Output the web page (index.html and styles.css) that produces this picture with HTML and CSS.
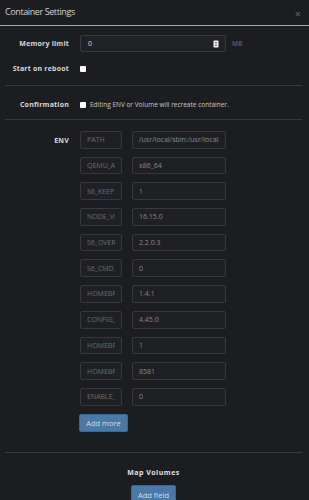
FILE: index.html
```html
<!DOCTYPE html>
<html lang="en">
<head>
    <meta charset="UTF-8">
    <meta name="viewport" content="width=device-width, initial-scale=1.0">
    <title>Container Settings</title>
    <link rel="stylesheet" href="styles.css">
</head>
<body>
    <div class="modal">
        <!-- 标题栏 -->
        <div class="modal-header">
            <h1 class="modal-title">Container Settings</h1>
            <span class="modal-close">&times;</span>
        </div>

        <div class="modal-body">
            <div class="form-row first">
                <label class="form-label">Memory limit</label>
                <div class="form-control">
                    <div class="number-input">
                        <span>0</span>
                        <svg class="spinner" width="6" height="8" viewBox="0 0 6 8">
                            <rect x="0.5" y="0.5" width="5" height="7" rx="1" fill="#f2f2f2" stroke="#888" stroke-width="0.6"/>
                            <path d="M1.8 3.2 L3 1.8 L4.2 3.2 Z M1.8 4.8 L3 6.2 L4.2 4.8 Z" fill="#333"/>
                        </svg>
                    </div>
                    <span class="unit">MB</span>
                </div>
            </div>

            <div class="form-row reboot">
                <label class="form-label">Start on reboot</label>
                <div class="form-control">
                    <span class="checkbox"></span>
                </div>
            </div>

            <hr class="divider">

            <div class="form-row confirm">
                <label class="form-label">Confirmation</label>
                <div class="form-control">
                    <span class="checkbox"></span>
                    <span class="hint">Editing ENV or Volume will recreate container.</span>
                </div>
            </div>

            <hr class="divider">

            <!-- 环境变量 -->
            <div class="form-row env">
                <label class="form-label">ENV</label>
                <div class="env-list">
                    <div class="env-item"><input class="env-key" value="PATH" readonly><input class="env-value" value="/usr/local/sbin:/usr/local/bin:/usr/sbin" readonly></div>
                    <div class="env-item"><input class="env-key" value="QEMU_ARCH" readonly><input class="env-value" value="x86_64" readonly></div>
                    <div class="env-item"><input class="env-key" value="S6_KEEP_ENV" readonly><input class="env-value" value="1" readonly></div>
                    <div class="env-item"><input class="env-key" value="NODE_VERSION" readonly><input class="env-value" value="16.15.0" readonly></div>
                    <div class="env-item"><input class="env-key" value="S6_OVERLAY" readonly><input class="env-value" value="2.2.0.3" readonly></div>
                    <div class="env-item"><input class="env-key" value="S6_CMD_WAIT" readonly><input class="env-value" value="0" readonly></div>
                    <div class="env-item"><input class="env-key" value="HOMEBRIDGE" readonly><input class="env-value" value="1.4.1" readonly></div>
                    <div class="env-item"><input class="env-key" value="CONFIG_UI" readonly><input class="env-value" value="4.45.0" readonly></div>
                    <div class="env-item"><input class="env-key" value="HOMEBRIDGE" readonly><input class="env-value" value="1" readonly></div>
                    <div class="env-item"><input class="env-key" value="HOMEBRIDGE" readonly><input class="env-value" value="8581" readonly></div>
                    <div class="env-item"><input class="env-key" value="ENABLE_AVAHI" readonly><input class="env-value" value="0" readonly></div>
                    <div class="env-actions"><button class="btn">Add more</button></div>
                </div>
            </div>

            <hr class="divider">

            <!-- 卷映射 -->
            <div class="volumes">
                <h2 class="volumes-title">Map Volumes</h2>
                <button class="btn">Add field</button>
            </div>
        </div>
    </div>
</body>
</html>
```

FILE: styles.css
```css
/* 基础样式 */
* {
    margin: 0;
    padding: 0;
    box-sizing: border-box;
}

html, body {
    background-color: #1c1d20;
    color: #ccc;
    font-family: 'Open Sans', 'Liberation Sans', sans-serif;
    overflow: hidden;
}

.modal {
    width: 309px;
    height: 500px;
}

/* 标题栏 */
.modal-header {
    height: 26px;
    display: flex;
    align-items: center;
    justify-content: space-between;
    padding: 0 8px 0 5px;
    border-bottom: 1px solid #a8a8a8;
}

.modal-title {
    font-size: 9px;
    font-weight: 400;
    color: #d4d4d4;
    letter-spacing: -0.4px;
    margin-top: -2px;
}

.modal-close {
    font-size: 11px;
    color: #555;
    font-weight: 700;
    margin-top: 2px;
}

.modal-body {
    padding: 0 7px 0 5px;
}

/* 表单行 */
.form-row {
    display: grid;
    grid-template-columns: 64px 1fr;
    column-gap: 11px;
    align-items: center;
}

.form-row.first {
    margin-top: 9px;
}

.form-row.reboot {
    margin-top: 12px;
}

.form-row.confirm {
    margin-top: 14px;
}

.form-label {
    text-align: right;
    font-size: 7px;
    font-weight: 700;
    color: #d8d8d8;
    letter-spacing: 0.2px;
    white-space: nowrap;
}

.form-control {
    display: flex;
    align-items: center;
}

.number-input {
    width: 146px;
    height: 17px;
    background: #202124;
    border: 1px solid #3a3b3e;
    border-radius: 2px;
    display: flex;
    align-items: center;
    justify-content: space-between;
    padding: 0 6px 0 7px;
    font-size: 7px;
    color: #ddd;
}

.unit {
    margin-left: 6px;
    font-size: 6.5px;
    font-weight: 700;
    color: #4c5561;
}

.checkbox {
    width: 6px;
    height: 6px;
    background: #fff;
    border-radius: 1px;
    flex-shrink: 0;
}

.hint {
    margin-left: 4px;
    font-size: 6.5px;
    color: #c8c8c8;
    white-space: nowrap;
}

.divider {
    border: none;
    border-top: 1px solid #3a3b3e;
}

.reboot + .divider {
    margin-top: 12px;
}

.confirm + .divider {
    margin-top: 10px;
}

/* ENV 列表 */
.form-row.env {
    align-items: start;
    margin-top: 11px;
}

.env .form-label {
    line-height: 17px;
    padding-top: 1px;
}

.env-list {
    display: flex;
    flex-direction: column;
    gap: 8px;
}

.env-item {
    display: flex;
    gap: 10px;
}

.env-key, .env-value {
    height: 17.7px;
    border: 1px solid #38393c;
    border-radius: 2px;
    background: #1f2023;
    font-family: 'Open Sans', 'Liberation Sans', sans-serif;
    font-size: 7px;
    padding: 0 6px;
    outline: none;
}

.env-key {
    width: 42px;
    color: #6c6c6c;
}

.env-value {
    width: 94px;
    color: #8a8a8a;
}

.env-actions {
    display: flex;
}

.btn {
    background: #4a79a5;
    color: #cfdfee;
    border: 1px solid #3d6890;
    border-radius: 2px;
    font-family: 'Open Sans', 'Liberation Sans', sans-serif;
    font-size: 7.5px;
    height: 18px;
    padding: 0 4px;
}

.env .btn {
    width: 49px;
    margin-left: -1px;
}

.env + .divider {
    margin-top: 20px;
}

/* 卷映射 */
.volumes {
    display: flex;
    flex-direction: column;
    align-items: center;
    padding-top: 15px;
}

.volumes-title {
    font-size: 7px;
    font-weight: 700;
    color: #e0e0e0;
    letter-spacing: 0.5px;
}

.volumes .btn {
    margin-top: 8px;
    width: 45px;
    height: 20px;
}
```
